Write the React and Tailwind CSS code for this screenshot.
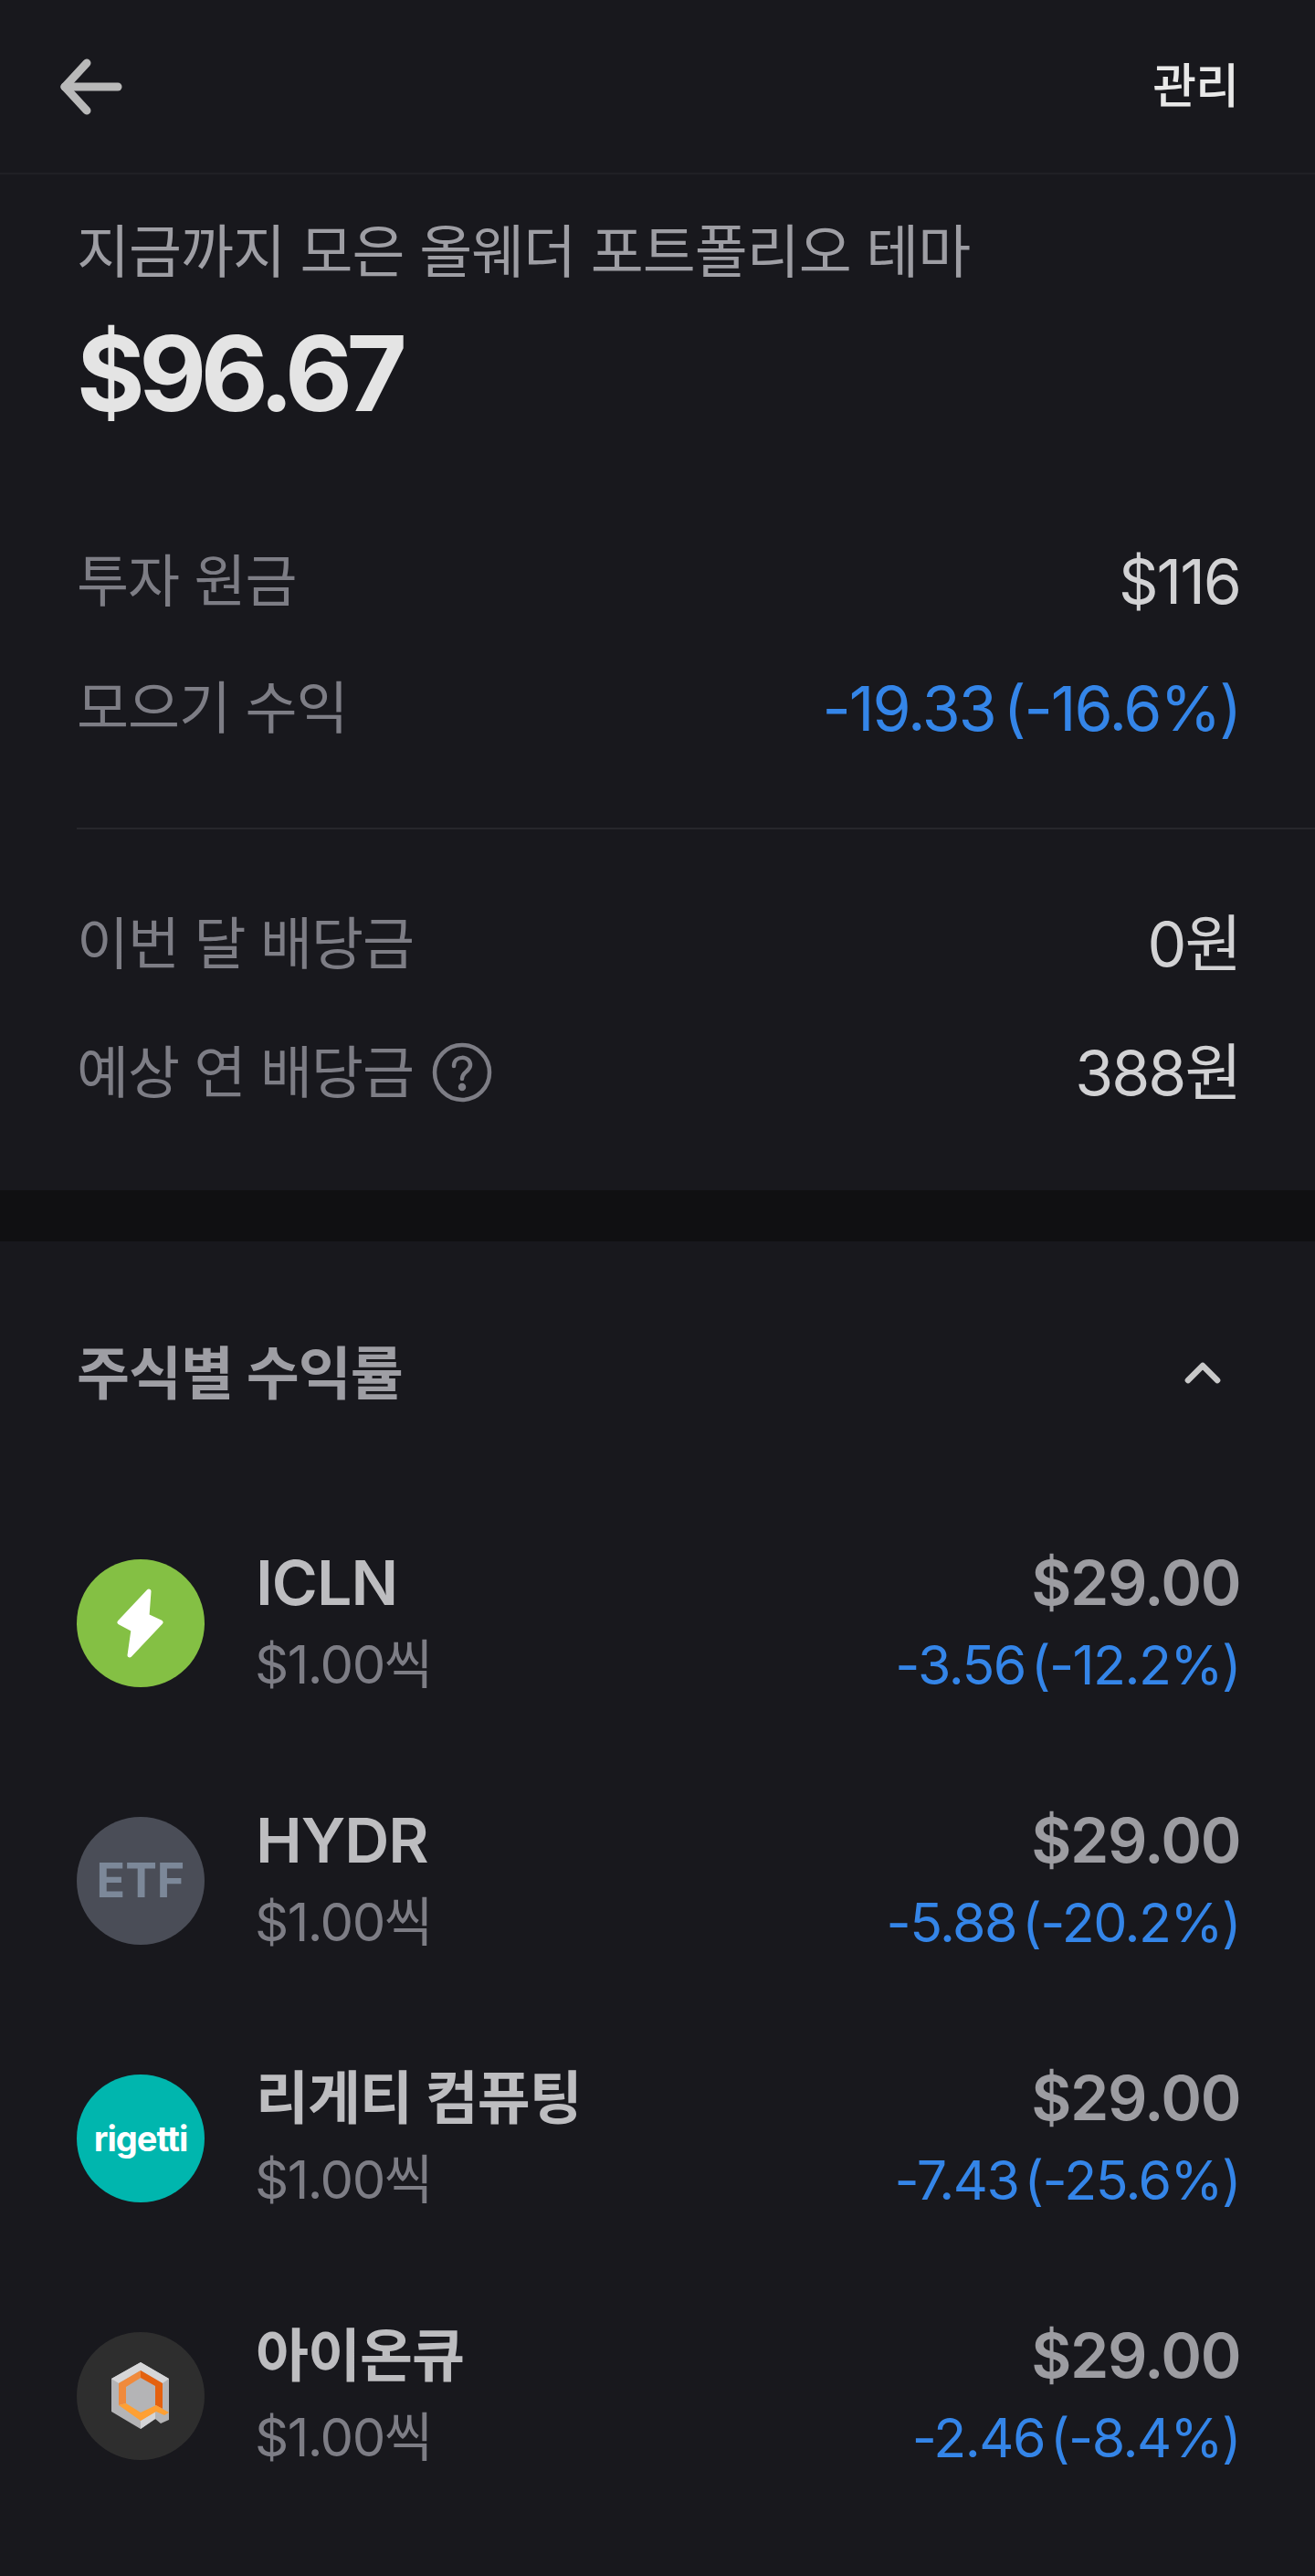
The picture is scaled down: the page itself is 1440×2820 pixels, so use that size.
import React from 'react';
import { ChevronUp } from 'lucide-react';

const font = "font-['Inter','Noto_Sans_CJK_KR',sans-serif]";

const Row = ({ label, value, blue, help }) => (
    <div className="flex items-center justify-between h-[80px]">
        <div className="flex items-center text-[#7d7d85] text-[62px] tracking-[-1px]">
            <span>{label}</span>
            {help && (
                <svg className="ml-[20px]" width="66" height="66" viewBox="0 0 66 66" fill="none" stroke="#7d7d85" strokeWidth="4.5" strokeLinecap="round">
                    <circle cx="33" cy="33" r="30" />
                    <path d="M24 26 C24 14 42 14 42 25 C42 32 33 32 33 40" />
                    <circle cx="33" cy="49" r="2" fill="#7d7d85" />
                </svg>
            )}
        </div>
        <span className={`text-[68px] tracking-[-2px] mr-[-2px] [word-spacing:-8px] ${blue ? 'text-[#3485e8]' : 'text-[#d2d2d4]'}`}>{value}</span>
    </div>
);

const Bolt = () => (
    <div className="w-[140px] h-[140px] rounded-full bg-[#84c044] flex items-center justify-center">
        <svg width="54" height="78" viewBox="0 0 54 78" fill="#fff" stroke="#fff" strokeWidth="5" strokeLinejoin="round">
            <path d="M36 4 L4 38 L19 46 L15 74 L49 38 L34 31 Z" />
        </svg>
    </div>
);

const Etf = () => (
    <div className="w-[140px] h-[140px] rounded-full bg-[#4a4d57] flex items-center justify-center text-[#7c8899] text-[52px] font-bold">ETF</div>
);

const Rigetti = () => (
    <div className="w-[140px] h-[140px] rounded-full bg-[#00b6ae] flex items-center justify-center text-white text-[38px] font-bold tracking-[-1px]">rigetti</div>
);

const IonQ = () => (
    <div className="w-[140px] h-[140px] rounded-full bg-[#2e2e2e] flex items-center justify-center">
        <svg width="64" height="74" viewBox="0 0 64 74">
            <polygon points="32,0 63,18 63,63 54,67 48,62 32,73 0,54 0,18" fill="#b4b4b6" />
            <polygon points="32,0 63,18 56,23 32,9 8,23 0,18" fill="#d6d6d8" />
            <polygon points="32,64 48,54 48,62 32,73" fill="#d4d4d6" />
            <polygon points="32,9 8,23 8,47 16,45 16,27 32,17" fill="#f08a3c" />
            <polygon points="32,9 56,23 56,51 48,47 48,26 32,17" fill="#e4610f" />
            <polygon points="8,47 32,64 49,54 58,58 63,55 49,47 32,55 16,45" fill="#ffa033" />
        </svg>
    </div>
);

const stocks = [
    { name: 'ICLN', size: 'text-[68px]', change: '-3.56 (-12.2%)', Icon: Bolt },
    { name: 'HYDR', size: 'text-[68px]', change: '-5.88 (-20.2%)', Icon: Etf },
    { name: '리게티 컴퓨팅', size: 'text-[63px]', change: '-7.43 (-25.6%)', Icon: Rigetti },
    { name: '아이온큐', size: 'text-[63px]', change: '-2.46 (-8.4%)', Icon: IonQ },
];

const StockRow = ({ name, size, change, Icon }) => (
    <div className="flex items-center h-[282px]">
        <Icon />
        <div className="ml-[56px] flex-1 flex flex-col">
            <span className={`h-[90px] leading-[90px] text-[#bdbdc0] font-semibold tracking-[-1px] ${size}`}>{name}</span>
            <span className="h-[90px] leading-[90px] text-[#7d7d85] text-[58px] tracking-[-1.5px] ml-[-1px]">$1.00씩</span>
        </div>
        <div className="flex flex-col items-end mr-[-2px]">
            <span className="h-[90px] leading-[90px] text-[#9c9ca1] text-[68px] font-semibold tracking-[-1.5px]">$29.00</span>
            <span className="h-[90px] leading-[92px] text-[#3485e8] text-[59px] tracking-[-1.5px] [word-spacing:-9px]">{change}</span>
        </div>
    </div>
);

export default function App() {
    return (
        <div className={`${font} w-full h-[2820px] bg-[#18181d] overflow-hidden`}>
            <header className="h-[191px] border-b-2 border-[#202025] pl-[64px] pr-[84px] flex items-center justify-between">
                <svg width="72" height="64" viewBox="0 0 72 64" fill="none" stroke="#b9b9b9" strokeWidth="9" strokeLinecap="round" strokeLinejoin="round">
                    <path d="M7 32 H65" />
                    <path d="M31 6 L7 32 L31 58" />
                </svg>
                <span className="text-[#e8e8e8] text-[52px] font-medium tracking-[-1px]">관리</span>
            </header>

            <section className="pt-[44px] pb-[89px] pl-[84px]">
                <div className="h-[80px] leading-[80px] text-[#9e9ea4] text-[63px] tracking-[-1px]">지금까지 모은 올웨더 포트폴리오 테마</div>
                <div className="mt-[34px] h-[120px] leading-[120px] text-[#e4e4e4] text-[114px] font-bold tracking-[-6.5px]">$96.67</div>

                <div className="pr-[84px] mt-[127px] flex flex-col gap-[59px]">
                    <Row label="투자 원금" value="$116" />
                    <Row label="모으기 수익" value="-19.33 (-16.6%)" blue />
                </div>

                <div className="mt-[91px] h-[2px] bg-[#27272c]" />

                <div className="pr-[84px] mt-[85px] flex flex-col gap-[61px]">
                    <Row label="이번 달 배당금" value="0원" />
                    <Row label="예상 연 배당금" value="388원" help />
                </div>
            </section>

            <div className="h-[56px] bg-[#101012]" />

            <section className="px-[84px]">
                <div className="mt-[104px] h-[80px] flex items-center justify-between">
                    <span className="text-[#9e9ea4] text-[63px] font-semibold tracking-[-1px]">주식별 수익률</span>
                    <ChevronUp className="w-[64px] h-[64px] mr-[7px] text-[#c8c8c8]" strokeWidth={2.5} />
                </div>
                <div className="mt-[93px]">
                    {stocks.map((s) => <StockRow key={s.name} {...s} />)}
                </div>
            </section>
        </div>
    );
}
